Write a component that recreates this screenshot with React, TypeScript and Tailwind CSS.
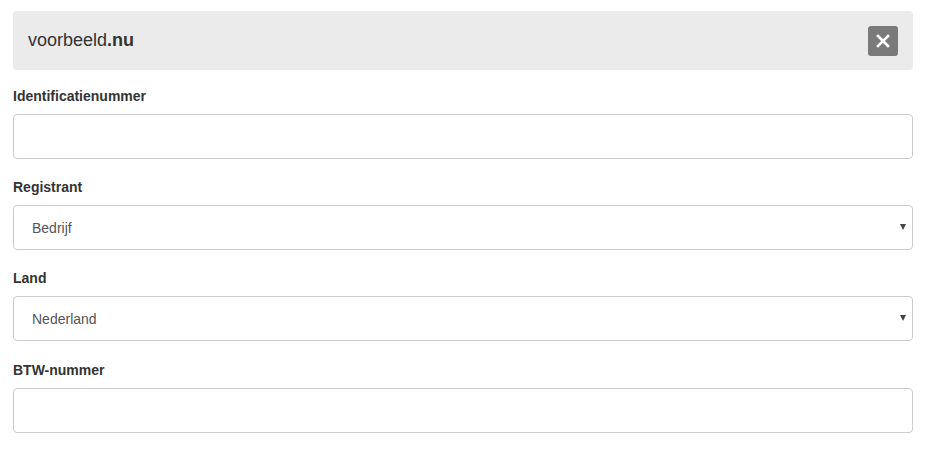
import { useState } from "react";

function Field({ label, children }: { label: string; children: React.ReactNode }) {
  return (
    <div className="mb-[18px]">
      <label className="block mb-2 text-[14px] leading-5 font-bold text-[#333]">{label}</label>
      {children}
    </div>
  );
}

function Select({ value, options }: { value: string; options: string[] }) {
  const [v, setV] = useState(value);
  return (
    <div className="relative">
      <select
        value={v}
        onChange={(e) => setV(e.target.value)}
        className="block w-full h-[45px] appearance-none rounded-[4px] border border-[#ccc] bg-white pl-[18px] pr-8 pt-px text-[14px] text-[#555] outline-none"
      >
        {options.map((o) => (
          <option key={o}>{o}</option>
        ))}
      </select>
      <span className="pointer-events-none absolute right-[7px] top-[19px] h-0 w-0 border-l-[3px] border-r-[3px] border-t-[6px] border-l-transparent border-r-transparent border-t-[#444]" />
    </div>
  );
}

export default function App() {
  return (
    <div className="pl-[13px] pr-[14px] pt-[11px] w-[927px] bg-white" style={{ fontFamily: '"Liberation Sans", Arial, sans-serif' }}>
      {/* header -------------------------------------------------------- */}
      <div className="flex h-[59px] items-center justify-between rounded-[4px] bg-[#ebebeb] pl-[15px] pr-[15px]">
        <div className="text-[18px] text-[#333]">
          voorbeeld<span className="font-bold">.nu</span>
        </div>
        <button className="flex h-[30px] w-[30px] items-center justify-center rounded-[3px] bg-[#7a7a7a]">
          <svg width="14" height="14" viewBox="0 0 14 14">
            <path d="M2 2L12 12M12 2L2 12" stroke="white" strokeWidth="2.6" strokeLinecap="square" />
          </svg>
        </button>
      </div>

      <div className="mt-4">
        <Field label="Identificatienummer">
          <input className="block w-full h-[45px] rounded-[4px] border border-[#ccc] bg-white px-3 text-[14px] outline-none" />
        </Field>
        <Field label="Registrant">
          <Select value="Bedrijf" options={["Bedrijf", "Particulier"]} />
        </Field>
        <Field label="Land">
          <Select value="Nederland" options={["Nederland", "België", "Duitsland"]} />
        </Field>
        <div className="pt-px">
          <Field label="BTW-nummer">
            <input className="block w-full h-[45px] rounded-[4px] border border-[#ccc] bg-white px-3 text-[14px] outline-none" />
          </Field>
        </div>
      </div>
    </div>
  );
}
